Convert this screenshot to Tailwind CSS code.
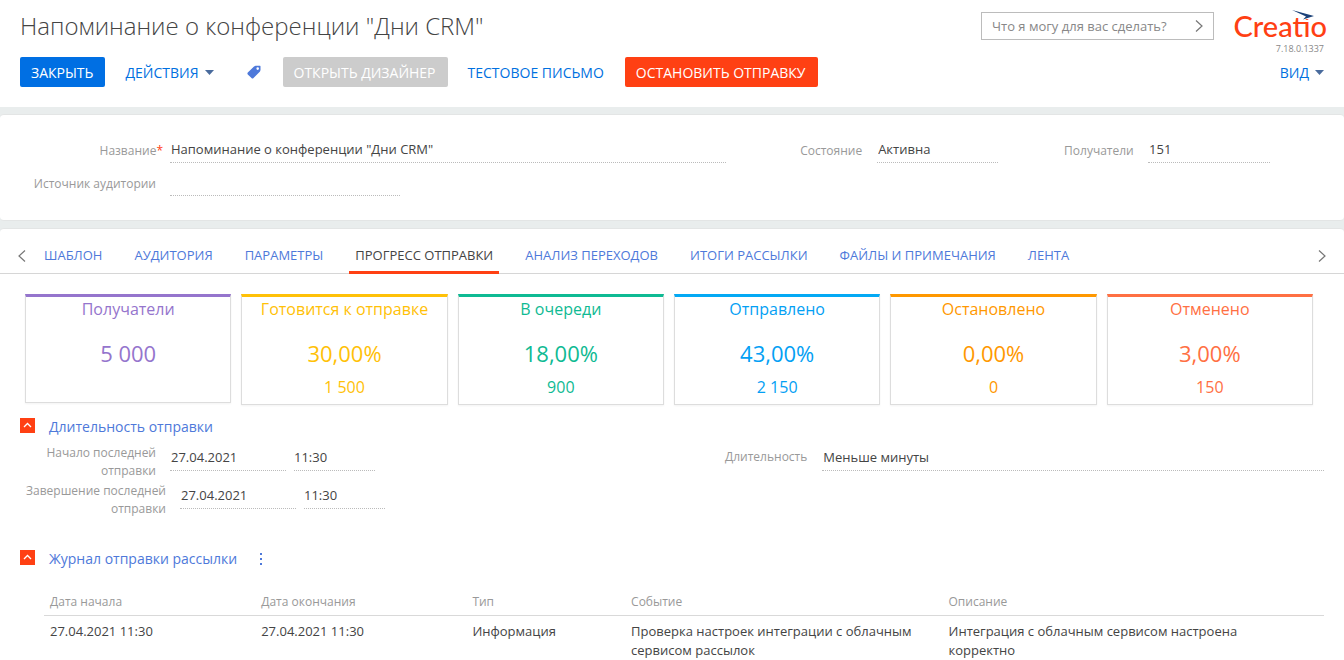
<!DOCTYPE html>
<html lang="ru">
<head>
<meta charset="utf-8">
<meta name="viewport" content="width=device-width, initial-scale=1">
<title>Напоминание о конференции "Дни CRM"</title>
<script src="https://cdn.jsdelivr.net/npm/@tailwindcss/browser@4"></script>
</head>
<body class="min-h-screen overflow-x-hidden bg-[#e9eded] font-['Open_Sans','Noto_Sans',sans-serif] text-[13px] text-[#444]">
<div class="flex min-h-screen flex-col gap-[7px]">

  <header class="flex flex-col gap-3 bg-white px-5 pt-2 pb-5">
    <div class="flex h-[37px] items-start">
      <h1 class="flex-1 text-2xl leading-[36px] font-light">Напоминание о конференции "Дни CRM"</h1>
      <form class="mt-1 flex h-7 w-[233px] items-center border border-[#bcbcbc] pr-2 pl-[10px]">
        <input type="text" aria-label="Командная строка" placeholder="Что я могу для вас сделать?" class="min-w-0 flex-1 pt-px text-[13px] outline-none placeholder:text-[#888]">
        <button type="button" aria-label="Выполнить"><svg class="size-3" viewBox="0 0 12 12" fill="none" stroke="#777" stroke-width="1.2"><path d="M3 .5 9 6 3 11.5"/></svg></button>
      </form>
      <div class="relative -mr-1 ml-5 flex w-[94px] flex-col items-end">
        <a href="#" class="pr-px font-['Lato',sans-serif] text-[29px] leading-9 font-medium text-[#ff4013]">Creatio</a>
        <svg class="absolute top-0.5 left-[58px] h-3 w-[23px]" viewBox="0 0 23 12"><path fill="#fff" d="M11 4h12v5H11z"/><path fill="#1b4178" d="M0 0 22 6 11 9.500 14 6.500Z"/></svg>
        <span class="pr-1 text-[9px] leading-[10px] text-[#888]">7.18.0.1337</span>
      </div>
    </div>
    <div class="flex h-[30px] items-center text-sm text-[#0070e0]">
      <button class="h-[30px] rounded-xs bg-[#006fe3] pt-px pr-3 pl-[11px] font-medium text-white">ЗАКРЫТЬ</button>
      <button class="ml-5 flex items-center gap-1.5 pt-px">ДЕЙСТВИЯ <svg class="h-[5px] w-[9px]" viewBox="0 0 9 5"><path fill="#4a6b9d" d="M0 0h9L4.500 5z"/></svg></button>
      <button aria-label="Теги" class="ml-[33px]"><svg class="size-[14px]" viewBox="0 0 14 14"><path fill="#4e79da" fill-rule="evenodd" d="M7 1.500 8.500.8H13Q13.500.8 13.500 1.500V5L13 6.500 6.500 13Q5.500 14 4.500 13L.8 9.500Q0 8.500 .8 7.500zM10.700 2.300a1.300 1.300 0 1 0 0 2.600 1.300 1.300 0 0 0 0-2.600z"/></svg></button>
      <button class="ml-[22px] h-[30px] rounded-xs bg-[#ccc] pt-px pr-3 pl-[11px] font-medium text-white">ОТКРЫТЬ ДИЗАЙНЕР</button>
      <button class="ml-5 pt-px">ТЕСТОВОЕ ПИСЬМО</button>
      <button class="ml-[21px] h-[30px] rounded-xs bg-[#ff4013] pt-px pr-3 pl-[11px] font-medium text-white">ОСТАНОВИТЬ ОТПРАВКУ</button>
      <button class="ml-auto flex items-center gap-1.5 pt-px">ВИД <svg class="h-[5px] w-[9px]" viewBox="0 0 9 5"><path fill="#4a6b9d" d="M0 0h9L4.500 5z"/></svg></button>
    </div>
  </header>

  <section class="flex flex-col gap-[9px] rounded-sm border-y border-[#e3e5e5] bg-white pt-6 pb-6">
    <div class="flex items-center pr-[74px]">
      <label for="name" class="w-[163px] text-right text-xs text-[#999]">Название<span class="text-[#ff4013]">*</span></label>
      <input id="name" value='Напоминание о конференции "Дни CRM"' class="ml-[7px] h-6 min-w-0 flex-[560] border-b border-dotted border-[#bbb] pb-1 pl-px outline-none">
      <label for="state" class="ml-[74px] w-[62px] text-xs text-[#999]">Состояние</label>
      <input id="state" value="Активна" class="ml-[15px] h-6 min-w-0 flex-[121] border-b border-dotted border-[#bbb] pb-1 pl-px outline-none">
      <label for="count" class="ml-[66px] w-[70px] text-xs text-[#999]">Получатели</label>
      <input id="count" value="151" class="ml-[14px] h-6 min-w-0 flex-[122] border-b border-dotted border-[#bbb] pb-1 pl-px outline-none">
    </div>
    <div class="flex items-center">
      <label for="source" class="w-[156px] text-right text-xs text-[#999]">Источник аудитории</label>
      <input id="source" class="ml-[14px] h-6 w-[230px] border-b border-dotted border-[#bbb] outline-none">
    </div>
  </section>

  <main class="flex-1 rounded-t-sm border-t border-[#e3e5e5] bg-white pt-[9px]">
    <nav class="flex h-9 items-center border-b border-[#d6d6d6] px-4 text-[#4e79da]">
      <button aria-label="Назад"><svg class="size-3" viewBox="0 0 12 12" fill="none" stroke="#777" stroke-width="1.200"><path d="M9 .5 3 6l6 5.500"/></svg></button>
      <div class="ml-2.5 flex h-9 flex-1 gap-5 whitespace-nowrap">
        <a href="#" class="px-1.5 leading-[34px]">ШАБЛОН</a>
        <a href="#" class="px-1.5 leading-[34px]">АУДИТОРИЯ</a>
        <a href="#" class="px-1.5 leading-[34px]">ПАРАМЕТРЫ</a>
        <a href="#" aria-current="page" class="border-b-3 border-[#ff4013] px-1.5 leading-[34px] text-[#444]">ПРОГРЕСС ОТПРАВКИ</a>
        <a href="#" class="px-1.5 leading-[34px]">АНАЛИЗ ПЕРЕХОДОВ</a>
        <a href="#" class="px-1.5 leading-[34px]">ИТОГИ РАССЫЛКИ</a>
        <a href="#" class="px-1.5 leading-[34px]">ФАЙЛЫ И ПРИМЕЧАНИЯ</a>
        <a href="#" class="px-1.5 leading-[34px]">ЛЕНТА</a>
      </div>
      <button aria-label="Вперёд"><svg class="size-3" viewBox="0 0 12 12" fill="none" stroke="#777" stroke-width="1.200"><path d="M3 .5 9 6l-6 5.500"/></svg></button>
    </nav>

    <div class="grid grid-cols-6 items-start gap-[10px] pt-5 pr-[31px] pl-[25px] text-center text-base">
      <div class="h-[109px] border border-t-3 border-[#ddd] border-t-[#9575cd] leading-6 text-[#9575cd] shadow-xs"><p>Получатели</p><p class="pt-5 text-[22px]">5 000</p></div>
      <div class="h-[111px] border border-t-3 border-[#ddd] border-t-[#ffc107] leading-6 text-[#ffc107] shadow-xs"><p>Готовится к отправке</p><p class="pt-5 text-[22px]">30,00%</p><p class="pt-2.5">1 500</p></div>
      <div class="h-[111px] border border-t-3 border-[#ddd] border-t-[#0fba93] leading-6 text-[#0fba93] shadow-xs"><p>В очереди</p><p class="pt-5 text-[22px]">18,00%</p><p class="pt-2.5">900</p></div>
      <div class="h-[111px] border border-t-3 border-[#ddd] border-t-[#03a9f4] leading-6 text-[#03a0f4] shadow-xs"><p>Отправлено</p><p class="pt-5 text-[22px]">43,00%</p><p class="pt-2.5">2 150</p></div>
      <div class="h-[111px] border border-t-3 border-[#ddd] border-t-[#ff9800] leading-6 text-[#ff9800] shadow-xs"><p>Остановлено</p><p class="pt-5 text-[22px]">0,00%</p><p class="pt-2.5">0</p></div>
      <div class="h-[111px] border border-t-3 border-[#ddd] border-t-[#ff7043] leading-6 text-[#ff7043] shadow-xs"><p>Отменено</p><p class="pt-5 text-[22px]">3,00%</p><p class="pt-2.5">150</p></div>
    </div>

    <div class="mt-3 flex h-5 items-start gap-[14px] pl-5">
      <button aria-label="Свернуть" class="mt-px bg-[#ff4013]"><svg class="size-[15px]" viewBox="0 0 15 15" fill="none" stroke="#fff" stroke-width="1.300"><path d="M4 9l3.500-3.500L11 9"/></svg></button>
      <h2 class="text-sm text-[#4e79da]">Длительность отправки</h2>
    </div>
    <div class="mt-[7px] flex pr-5">
      <div class="flex flex-col gap-0.5">
        <div class="flex">
          <label for="d1" class="w-[156px] pl-9 text-right text-xs leading-[18px] text-[#999]">Начало последней отправки</label>
          <input id="d1" value="27.04.2021" class="ml-[14px] h-[27px] w-[116px] border-b border-dotted border-[#bbb] pl-px outline-none">
          <input aria-label="Время начала" value="11:30" class="ml-2 h-[27px] w-[81px] border-b border-dotted border-[#bbb] outline-none">
        </div>
        <div class="flex">
          <label for="d2" class="w-[166px] pl-5 text-right text-xs leading-[18px] text-[#999]">Завершение последней отправки</label>
          <input id="d2" value="27.04.2021" class="ml-[14px] h-[27px] w-[116px] border-b border-dotted border-[#bbb] pl-px outline-none">
          <input aria-label="Время завершения" value="11:30" class="ml-2 h-[27px] w-[81px] border-b border-dotted border-[#bbb] outline-none">
        </div>
      </div>
      <div class="ml-[340px] flex flex-1 items-start">
        <label for="dur" class="text-xs leading-[26px] text-[#999]">Длительность</label>
        <input id="dur" value="Меньше минуты" class="ml-[15px] h-[27px] min-w-0 flex-1 border-b border-dotted border-[#bbb] pl-px outline-none">
      </div>
    </div>

    <div class="mt-[31px] flex h-5 items-start gap-[14px] pl-5">
      <button aria-label="Свернуть" class="mt-px bg-[#ff4013]"><svg class="size-[15px]" viewBox="0 0 15 15" fill="none" stroke="#fff" stroke-width="1.300"><path d="M4 9l3.500-3.500L11 9"/></svg></button>
      <h2 class="text-sm text-[#4e79da]">Журнал отправки рассылки</h2>
      <button aria-label="Меню" class="mt-1 ml-[7px]"><svg class="h-3 w-[6px]" viewBox="0 0 6 12" fill="#4e79da"><path d="M2 0h2v2H2zM2 5h2v2H2zM2 10h2v2H2z"/></svg></button>
    </div>
    <div class="mt-5 pr-5 pl-11">
      <table class="w-full table-fixed text-left">
        <colgroup><col class="w-[16.500%]"><col class="w-[16.500%]"><col class="w-[12.400%]"><col class="w-[24.800%]"><col></colgroup>
        <thead class="border-b border-[#d9d9d9] text-xs text-[#999]">
          <tr class="h-[26px]"><th class="px-1.5 font-normal">Дата начала</th><th class="px-1.5 font-normal">Дата окончания</th><th class="px-1.5 font-normal">Тип</th><th class="px-1.5 font-normal">Событие</th><th class="px-1.5 font-normal">Описание</th></tr>
        </thead>
        <tbody class="align-top leading-[19px]">
          <tr><td class="px-1.5 pt-1.5">27.04.2021 11:30</td><td class="px-1.5 pt-1.5">27.04.2021 11:30</td><td class="px-1.5 pt-1.5">Информация</td><td class="px-1.5 pt-1.5">Проверка настроек интеграции с облачным сервисом рассылок</td><td class="px-1.5 pt-1.5 pr-20">Интеграция с облачным сервисом настроена корректно</td></tr>
        </tbody>
      </table>
    </div>
  </main>
</div>
</body>
</html>
